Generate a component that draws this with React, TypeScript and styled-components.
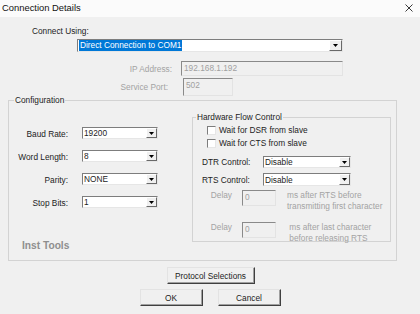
import React from "react";
import styled, { createGlobalStyle } from "styled-components";

const Global = createGlobalStyle`
  html, body { margin: 0; padding: 0; background: #f0f0f0; }
  body { font-family: "Liberation Sans", Arial, sans-serif; font-size: 8.3px; color: #1c1c1c; }
  * { box-sizing: border-box; }
`;

const Window = styled.div`
  width: 420px;
  height: 314px;
  background: #f0f0f0;
  display: flex;
  flex-direction: column;
  overflow: hidden;
`;

const TitleBar = styled.div`
  height: 17px;
  flex: none;
  background: #fbfbfb;
  display: flex;
  align-items: center;
  justify-content: space-between;
  padding: 0 7px 2px 2px;
`;

const Title = styled.span`
  font-size: 9.4px;
  line-height: 12px;
  color: #111;
`;

const CloseIcon = styled.svg`
  display: block;
`;

const TopLabel = styled.div`
  margin: 9px 0 0 32px;
  line-height: 10px;
`;

const ComboBox = styled.div<{ $w: number; $h: number }>`
  width: ${(p) => p.$w}px;
  height: ${(p) => p.$h}px;
  display: flex;
  background: #fff;
  border-top: 1px solid #7d7d7d;
  border-left: 1px solid #7d7d7d;
  border-right: 1px solid #e6e6e6;
  border-bottom: 1px solid #e6e6e6;
`;

const ComboText = styled.div`
  flex: 1;
  display: flex;
  align-items: center;
  padding-left: 1px;
  white-space: nowrap;
  overflow: hidden;
`;

const Selected = styled.span`
  background: #0078d7;
  color: #fff;
  padding: 1px 1px;
  line-height: 9px;
`;

const ArrowButton = styled.div<{ $bw: number }>`
  width: ${(p) => p.$bw}px;
  flex: none;
  background: #f0f0f0;
  border-top: 1px solid #fff;
  border-left: 1px solid #fff;
  border-right: 1px solid #696969;
  border-bottom: 1px solid #696969;
  display: flex;
  align-items: center;
  justify-content: center;
`;

const MainComboWrap = styled.div`
  margin: 3px 0 0 77px;
`;

const FieldRow = styled.div<{ $labelW: number; $gap: number; $top: number }>`
  display: grid;
  grid-template-columns: ${(p) => p.$labelW}px auto;
  column-gap: ${(p) => p.$gap}px;
  align-items: center;
  margin-top: ${(p) => p.$top}px;
`;

const DisabledLabel = styled.span`
  justify-self: end;
  color: #a3a3a3;
  line-height: 10px;
  white-space: nowrap;
`;

const DisabledInput = styled.div<{ $w: number; $h: number }>`
  width: ${(p) => p.$w}px;
  height: ${(p) => p.$h}px;
  background: #f0f0f0;
  border-top: 1px solid #8a8a8a;
  border-left: 1px solid #8a8a8a;
  border-right: 1px solid #e3e3e3;
  border-bottom: 1px solid #e3e3e3;
  color: #a0a0a0;
  padding: 1px 0 0 2px;
  line-height: 10px;
  white-space: nowrap;
`;

const Group = styled.fieldset<{ $h: number }>`
  margin: 0;
  padding: 0;
  min-width: 0;
  height: ${(p) => p.$h}px;
  border: 1px solid #d3d3d3;
`;

const ConfigGroup = styled(Group)`
  margin: -1px 23px 0 8px;
`;

const HfcGroup = styled(Group)`
  margin-top: 7px;
  width: 199px;
  display: flex;
  flex-direction: column;
`;

const Legend = styled.legend<{ $ml: number }>`
  margin-left: ${(p) => p.$ml}px;
  padding: 0 1px;
  line-height: 10px;
`;

const ConfigGrid = styled.div`
  display: grid;
  grid-template-columns: 183px 199px;
`;

const FieldList = styled.div`
  display: grid;
  grid-template-columns: 59px 76px;
  column-gap: 14px;
  row-gap: 9px;
  padding-top: 21px;
  align-content: start;
  align-items: center;
`;

const FieldLabel = styled.span`
  justify-self: end;
  line-height: 12px;
  padding-top: 2px;
  white-space: nowrap;
`;

const CheckRow = styled.label`
  display: flex;
  align-items: center;
  gap: 3px;
  margin: 4px 0 0 14px;
  line-height: 9px;
`;

const CheckBox = styled.span`
  width: 9px;
  height: 9px;
  flex: none;
  background: #fff;
  border-top: 1px solid #7d7d7d;
  border-left: 1px solid #7d7d7d;
  border-right: 1px solid #e6e6e6;
  border-bottom: 1px solid #e6e6e6;
`;

const ControlList = styled.div`
  display: grid;
  grid-template-columns: 61px 88px;
  row-gap: 5px;
  margin: 8px 0 0 9px;
  align-items: center;
`;

const ControlLabel = styled.span`
  line-height: 12px;
  white-space: nowrap;
`;

const DelayList = styled.div`
  display: grid;
  grid-template-columns: 30px 34px auto;
  column-gap: 10px;
  row-gap: 10px;
  margin: 4px 0 0 9px;
  align-items: start;
`;

const DelayLabel = styled.span`
  justify-self: end;
  color: #a3a3a3;
  line-height: 11px;
`;

const DelayNote = styled.span`
  color: #a3a3a3;
  line-height: 11px;
  white-space: nowrap;
  padding-left: 1px;
`;

const InstTools = styled.div`
  margin: -2px 0 0 13px;
  font-size: 10.2px;
  font-weight: bold;
  color: #8e8e8e;
  line-height: 12px;
`;

const Button = styled.button<{ $w: number }>`
  width: ${(p) => p.$w}px;
  height: 17px;
  padding: 0;
  font: inherit;
  color: #1c1c1c;
  background: #f0f0f0;
  border: 1px solid;
  border-color: #e3e3e3 #404040 #404040 #e3e3e3;
  box-shadow: inset -1px -1px 0 #a0a0a0;
  line-height: 12px;
`;

const ProtocolButton = styled(Button)`
  align-self: center;
  margin: 6px 0 0 1px;
`;

const ButtonRow = styled.div`
  display: flex;
  justify-content: center;
  gap: 15px;
  margin-top: 5px;
`;

const Arrow = () => (
  <svg width="5" height="3" viewBox="0 0 5 3">
    <path d="M0 0h5L2.5 3z" fill="#000" />
  </svg>
);

const Combo = ({ value, w, h, bw = 11, selected = false }: { value: string; w: number; h: number; bw?: number; selected?: boolean }) => (
  <ComboBox $w={w} $h={h}>
    <ComboText>{selected ? <Selected>{value}</Selected> : value}</ComboText>
    <ArrowButton $bw={bw}>
      <Arrow />
    </ArrowButton>
  </ComboBox>
);

export default function App() {
  return (
    <Window>
      <Global />
      <TitleBar>
        <Title>Connection Details</Title>
        <CloseIcon width="8" height="8" viewBox="0 0 8 8">
          <path d="M0.5 0.5L7.5 7.5M7.5 0.5L0.5 7.5" stroke="#222" strokeWidth="0.9" />
        </CloseIcon>
      </TitleBar>

      <TopLabel>Connect Using:</TopLabel>
      <MainComboWrap>
        <Combo value="Direct Connection to COM1" w={266} h={13} bw={13} selected />
      </MainComboWrap>

      <FieldRow $labelW={172} $gap={9} $top={9}>
        <DisabledLabel>IP Address:</DisabledLabel>
        <DisabledInput $w={162} $h={15}>192.168.1.192</DisabledInput>
      </FieldRow>
      <FieldRow $labelW={168} $gap={15} $top={2}>
        <DisabledLabel>Service Port:</DisabledLabel>
        <DisabledInput $w={50} $h={18}>502</DisabledInput>
      </FieldRow>

      <ConfigGroup $h={166}>
        <Legend $ml={5}>Configuration</Legend>
        <ConfigGrid>
          <FieldList>
            <FieldLabel>Baud Rate:</FieldLabel>
            <Combo value="19200" w={76} h={12} />
            <FieldLabel>Word Length:</FieldLabel>
            <Combo value="8" w={76} h={12} />
            <FieldLabel>Parity:</FieldLabel>
            <Combo value="NONE" w={76} h={12} />
            <FieldLabel>Stop Bits:</FieldLabel>
            <Combo value="1" w={76} h={12} />
          </FieldList>

          <HfcGroup $h={130}>
            <Legend $ml={3}>Hardware Flow Control</Legend>
            <CheckRow>
              <CheckBox />
              Wait for DSR from slave
            </CheckRow>
            <CheckRow>
              <CheckBox />
              Wait for CTS from slave
            </CheckRow>
            <ControlList>
              <ControlLabel>DTR Control:</ControlLabel>
              <Combo value="Disable" w={88} h={12} />
              <ControlLabel>RTS Control:</ControlLabel>
              <Combo value="Disable" w={88} h={13} />
            </ControlList>
            <DelayList>
              <DelayLabel>Delay</DelayLabel>
              <DisabledInput $w={34} $h={16}>0</DisabledInput>
              <DelayNote>
                ms after RTS before
                <br />
                transmitting first character
              </DelayNote>
              <DelayLabel>Delay</DelayLabel>
              <DisabledInput $w={34} $h={16}>0</DisabledInput>
              <DelayNote>
                &nbsp;ms after last character
                <br />
                &nbsp;before releasing RTS
              </DelayNote>
            </DelayList>
          </HfcGroup>
        </ConfigGrid>
        <InstTools>Inst Tools</InstTools>
      </ConfigGroup>

      <ProtocolButton $w={88}>Protocol Selections</ProtocolButton>
      <ButtonRow>
        <Button $w={63}>OK</Button>
        <Button $w={63}>Cancel</Button>
      </ButtonRow>
    </Window>
  );
}
